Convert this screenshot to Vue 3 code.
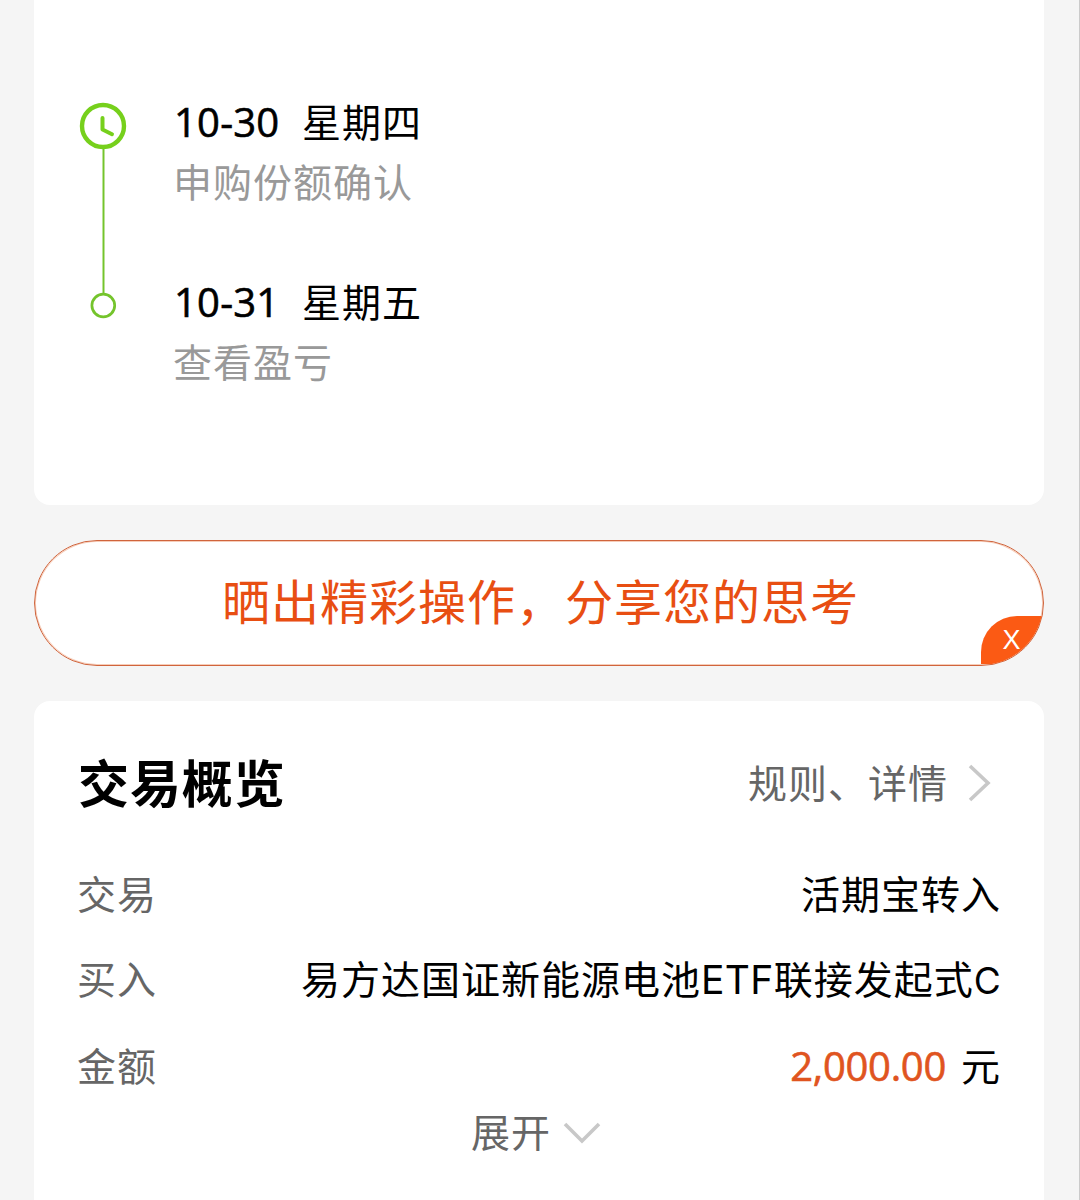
<script setup>
const steps = [
  { date: '10-30', day: '星期四', note: '申购份额确认' },
  { date: '10-31', day: '星期五', note: '查看盈亏' },
]
</script>

<template>
  <main class="page">
    <section class="card timeline">
      <svg class="track" width="48" height="220" viewBox="0 0 48 220" fill="none">
        <path d="M24.5 46V192" stroke="#74c42c" stroke-width="2" />
        <circle cx="24" cy="25" r="21" stroke="#76d01c" stroke-width="4.4" />
        <path d="M23.5 17V28.5L33 33.2" stroke="#76d01c" stroke-width="4" stroke-linecap="round" stroke-linejoin="round" />
        <circle cx="24.3" cy="204.5" r="11.4" stroke="#74c42c" stroke-width="2.7" />
      </svg>
      <ol class="steps">
        <li v-for="s in steps" :key="s.date" class="step">
          <p class="when"><span class="date">{{ s.date }}</span><span>{{ s.day }}</span></p>
          <p class="note">{{ s.note }}</p>
        </li>
      </ol>
    </section>

    <section class="banner">
      <span class="slogan">晒出精彩操作，分享您的思考</span>
      <button class="close">X</button>
    </section>

    <section class="card overview">
      <header class="head">
        <h2>交易概览</h2>
        <a class="rules">规则、详情
          <svg width="24" height="38" viewBox="0 0 24 38" fill="none"><path d="M2 2L20 19L2 36" stroke="#c8c8c8" stroke-width="3.6" /></svg>
        </a>
      </header>
      <dl class="rows">
        <div class="row"><dt>交易</dt><dd>活期宝转入</dd></div>
        <div class="row"><dt>买入</dt><dd>易方达国证新能源电池<span class="latin">ETF</span>联接发起式<span class="latin last">C</span></dd></div>
        <div class="row"><dt>金额</dt><dd><span class="amount">2,000.00</span><span class="unit">元</span></dd></div>
      </dl>
      <div class="expand">
        <span>展开</span>
        <svg width="38" height="24" viewBox="0 0 38 24" fill="none"><path d="M2 4L19 21L36 4" stroke="#c8c8c8" stroke-width="3.6" /></svg>
      </div>
    </section>
  </main>
</template>

<style>
body {
  margin: 0;
  background: #f5f5f5;
}
</style>

<style scoped>
.page {
  box-sizing: border-box;
  width: 1080px;
  height: 1200px;
  overflow: hidden;
  padding: 0 35px 0 34px;
  border-right: 1px solid #cbcbcb;
  background: #f5f5f5;
  color: #000;
  font: 39px/60px "Open Sans", "Noto Sans CJK SC", sans-serif;
  letter-spacing: 1px;
  white-space: nowrap;
}
p, h2, ol, dl, dd {
  margin: 0;
  padding: 0;
}
.card {
  box-sizing: border-box;
  background: #fff;
}
.timeline {
  display: flex;
  height: 505px;
  padding: 92px 0 0 45px;
  border-radius: 0 0 16px 16px;
}
.track {
  flex: none;
  margin-top: 9px;
}
.steps {
  margin-left: 46px;
  list-style: none;
}
.step {
  height: 180px;
}
.when {
  display: flex;
}
.date {
  box-sizing: border-box;
  width: 129px;
  padding-left: 1px;
  font-size: 40px;
  letter-spacing: 0.2px;
  -webkit-text-stroke: 0.6px currentColor;
}
.note {
  color: #999;
}
.banner {
  position: relative;
  box-sizing: border-box;
  display: flex;
  justify-content: center;
  height: 126px;
  margin-top: 35px;
  padding-left: 3px;
  border: 1px solid #d0643c;
  border-radius: 63px;
  background: #fff;
  box-shadow: inset 0 0 0 1px #f6cdb9;
  overflow: hidden;
  color: #e84e12;
  font-size: 48px;
  line-height: 122px;
}
.close {
  position: absolute;
  right: 0;
  bottom: 1px;
  width: 62px;
  height: 48px;
  padding: 0 1px 0 0;
  border: 0;
  border-radius: 36px 0 0 0;
  background: #fb5a14;
  color: #fff;
  font: 27px/48px "Liberation Sans", sans-serif;
}
.overview {
  height: 520px;
  margin-top: 35px;
  padding: 52px 43px 0 44px;
  border-radius: 16px;
}
.head {
  display: flex;
  justify-content: space-between;
}
h2 {
  font-size: 51px;
  line-height: 60px;
  font-weight: 700;
  letter-spacing: 0.9px;
}
.rules {
  display: flex;
  align-items: center;
  gap: 20px;
  margin-right: 9px;
  color: #666;
}
.rows {
  margin-top: 38px;
}
.row {
  display: flex;
  justify-content: space-between;
  line-height: 85px;
}
dt {
  margin-left: -1px;
  color: #666;
}
.latin {
  font-family: "Inter", sans-serif;
  letter-spacing: 0.3px;
}
.last {
  font-size: 37px;
}
.amount {
  margin-right: 15px;
  color: #e05420;
  font-size: 40px;
  letter-spacing: -0.3px;
  -webkit-text-stroke: 0.6px currentColor;
}
.expand {
  display: flex;
  align-items: center;
  gap: 12px;
  margin: -6px 0 0 393px;
  color: #666;
}
</style>
